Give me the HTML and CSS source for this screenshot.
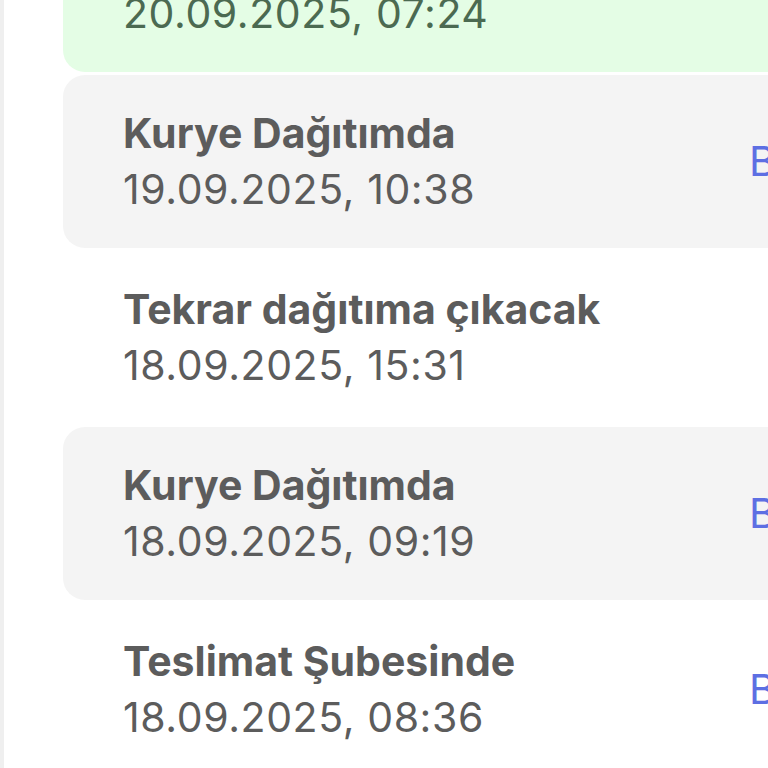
FILE: index.html
```html
<!DOCTYPE html>
<html lang="tr">
<head>
<meta charset="utf-8">
<link rel="stylesheet" href="styles.css">
</head>
<body>
<div class="page">
  <ul class="timeline">
    <li class="event event--done">
      <div class="event__text">
        <div class="event__title">Teslim Edildi</div>
        <div class="event__date">20.09.2025, 07:24</div>
      </div>
      <div class="event__place">Bursa</div>
    </li>
    <li class="event event--alt">
      <div class="event__text">
        <div class="event__title">Kurye Dağıtımda</div>
        <div class="event__date">19.09.2025, 10:38</div>
      </div>
      <div class="event__place">Bursa</div>
    </li>
    <li class="event">
      <div class="event__text">
        <div class="event__title">Tekrar dağıtıma çıkacak</div>
        <div class="event__date">18.09.2025, 15:31</div>
      </div>
      <div class="event__place"></div>
    </li>
    <li class="event event--alt">
      <div class="event__text">
        <div class="event__title">Kurye Dağıtımda</div>
        <div class="event__date">18.09.2025, 09:19</div>
      </div>
      <div class="event__place">Bursa</div>
    </li>
    <li class="event">
      <div class="event__text">
        <div class="event__title">Teslimat Şubesinde</div>
        <div class="event__date">18.09.2025, 08:36</div>
      </div>
      <div class="event__place">Bursa</div>
    </li>
  </ul>
</div>
</body>
</html>
```

FILE: styles.css
```css
html, body {
  margin: 0;
  padding: 0;
  background: #ffffff;
  overflow: hidden;
  width: 768px;
  height: 768px;
}
.page {
  display: flow-root;
  border-left: 4px solid #efefef;
  height: 768px;
  padding-left: 59px;
  font-family: Inter, "Noto Sans", sans-serif;
}
.timeline {
  list-style: none;
  margin: -101px 0 0 0;
  padding: 0;
  width: 900px;
  display: flex;
  flex-direction: column;
  gap: 3px;
}
.event {
  display: grid;
  grid-template-columns: 626px auto;
  align-items: center;
  padding: 30px 0 31px 60px;
  border-radius: 22px;
  color: #5c5c5c;
}
.event--alt {
  background: #f4f4f4;
}
.event--done {
  background: #e4fde5;
  color: #4b6a51;
}
.event__title {
  font-size: 41px;
  line-height: 56px;
  font-weight: 700;
  letter-spacing: 0;
}
.event__date {
  font-size: 41px;
  line-height: 56px;
  font-weight: 400;
  letter-spacing: 0.6px;
}
.event__place {
  font-size: 41px;
  color: #5d6fe3;
  white-space: nowrap;
}
```
